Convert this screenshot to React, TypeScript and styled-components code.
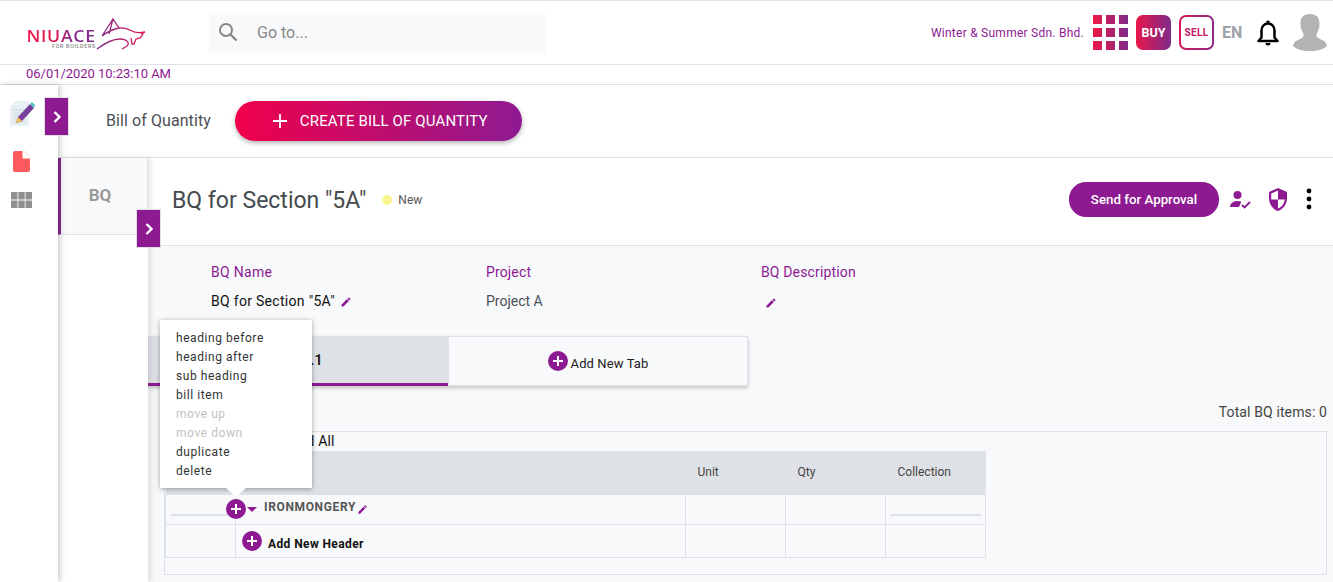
import React from "react";
import styled, { createGlobalStyle } from "styled-components";

const purple = "#8e1a92";
const line = "#dee2e6";
const grey = "#f8f9fa";

const GlobalStyle = createGlobalStyle`
  * { box-sizing: border-box; }
  html, body { margin: 0; height: 100%; overflow: hidden; }
  body { font-family: Roboto, "Liberation Sans", Arial, sans-serif; background: #fff; color: #212529; }
`;

const Page = styled.div`
  width: 1333px;
  height: 582px;
  display: flex;
  flex-direction: column;
  overflow: hidden;
  position: relative;
`;

const Header = styled.header`
  height: 65px;
  border-top: 1px solid ${line};
  border-bottom: 1px solid ${line};
  display: flex;
  align-items: center;
`;

const LogoBox = styled.div`
  width: 209px;
  height: 32px;
  padding-left: 26px;
  display: flex;
  align-items: flex-start;
  flex: none;
  align-self: flex-start;
  margin-top: 17px;
`;

const LogoWords = styled.div`
  display: flex;
  flex-direction: column;
  align-items: flex-end;
  width: 70px;
  margin-top: 12px;
`;

const LogoName = styled.span`
  font-family: "Open Sans", sans-serif;
  font-size: 15.5px;
  height: 13px;
  line-height: 13px;
  letter-spacing: 0.6px;
  font-weight: 600;
  background: linear-gradient(90deg, #ea1a4b 0%, #e01a55 42%, #8a2a8a 62%, #7f2a8c 100%);
  -webkit-background-clip: text;
  background-clip: text;
  color: transparent;
  transform: scaleX(1.14);
  transform-origin: right center;
`;

const LogoSub = styled.span`
  font-size: 5.5px;
  line-height: 5px;
  margin-top: 1px;
  letter-spacing: 0.6px;
  font-weight: 500;
  color: #8a8a8a;
`;

const BullSvg = styled.svg`
  width: 50px;
  height: 32px;
  flex: none;
`;

const SearchBox = styled.div`
  width: 337px;
  height: 40px;
  margin-top: 1px;
  padding-bottom: 2px;
  background: ${grey};
  display: flex;
  align-items: center;
  gap: 19px;
  padding-left: 9px;
  color: #888;
  font-size: 16px;
`;

const HeaderRight = styled.div`
  margin-left: auto;
  display: flex;
  align-items: center;
  height: 100%;
`;

const Company = styled.span`
  font-size: 12px;
  color: ${purple};
  letter-spacing: 0.25px;
  margin-right: 9px;
`;

const Waffle = styled.div`
  width: 35px;
  height: 35px;
  background: linear-gradient(90deg, #ed1846, #7e2a8a);
  margin-right: 8px;
  position: relative;
`;

const WaffleGap = styled.span<{ $v?: boolean }>`
  position: absolute;
  background: #fff;
  ${(p) => (p.$v ? "top:0;bottom:0;width:4px;" : "left:0;right:0;height:4px;")}
`;

const BuyBadge = styled.div`
  width: 35px;
  height: 35px;
  border-radius: 7px;
  background: linear-gradient(90deg, #e8174a, #7e2a8a);
  color: #fff;
  font-size: 12.5px;
  font-weight: 700;
  display: flex;
  align-items: center;
  justify-content: center;
  margin-right: 8px;
`;

const SellBadge = styled.div`
  width: 35px;
  height: 35px;
  border-radius: 7px;
  padding: 2px;
  background: linear-gradient(90deg, #d61a55, #8e2a8a);
  margin-right: 8px;
`;

const SellInner = styled.div`
  width: 100%;
  height: 100%;
  border-radius: 5px;
  background: #fff;
  color: #c8145f;
  font-size: 10px;
  font-weight: 700;
  letter-spacing: 0.4px;
  display: flex;
  align-items: center;
  justify-content: center;
`;

const Lang = styled.span`
  font-size: 16px;
  font-weight: 700;
  color: #9ea3a9;
  width: 23px;
  margin-right: 11px;
`;

const BellSvg = styled.svg`
  width: 24px;
  height: 28px;
  margin-right: 13px;
`;

const AvatarSvg = styled.svg`
  width: 34px;
  height: 37px;
  margin-right: 6px;
`;

const DateRow = styled.div`
  height: 20px;
  border-bottom: 1px solid ${line};
  padding-left: 26px;
  font-size: 13px;
  line-height: 18px;
  letter-spacing: -0.03px;
  color: ${purple};
`;

const Body = styled.div`
  flex: 1;
  display: flex;
  min-height: 0;
`;

const Rail = styled.aside`
  width: 58px;
  flex: none;
  box-shadow: 2px 0 6px rgba(0, 0, 0, 0.22);
  position: relative;
  z-index: 3;
  background: #fff;
  display: flex;
  flex-direction: column;
  align-items: flex-start;
  padding: 15px 0 0 9px;
`;

const RailIcon = styled.svg<{ $mt: number; $ml?: number }>`
  margin-top: ${(p) => p.$mt}px;
  margin-left: ${(p) => p.$ml ?? 0}px;
`;

const Toggle = styled.button<{ $left: number; $top: number }>`
  position: absolute;
  left: ${(p) => p.$left}px;
  top: ${(p) => p.$top}px;
  width: 25px;
  height: 39px;
  background: ${purple};
  border: 1px solid ${line};
  padding: 0;
  display: flex;
  align-items: center;
  justify-content: center;
  z-index: 5;
`;

const Content = styled.main`
  flex: 1;
  min-width: 0;
  display: flex;
  flex-direction: column;
`;

const SubHeader = styled.div`
  height: 73px;
  flex: none;
  border-bottom: 1px solid ${line};
  display: flex;
  align-items: center;
  padding-left: 48px;
  padding-bottom: 1px;
`;

const SubTitle = styled.span`
  font-size: 16px;
  letter-spacing: 0.08px;
  color: #4a4f55;
  margin-right: 24px;
`;

const CreateButton = styled.button`
  width: 287px;
  height: 40px;
  border: 0;
  border-radius: 20px;
  background: linear-gradient(90deg, #f0004a, #8e1a92);
  box-shadow: 0 2px 5px rgba(0, 0, 0, 0.3);
  color: #fff;
  font-family: Roboto, sans-serif;
  font-size: 15px;
  letter-spacing: 0.15px;
  display: flex;
  align-items: center;
  padding: 0 0 0 37px;
  gap: 12px;
`;

const Split = styled.div`
  flex: 1;
  display: flex;
  min-height: 0;
  position: relative;
`;

const SideTabs = styled.div`
  width: 90px;
  flex: none;
  background: #fff;
  box-shadow: 3px 0 6px rgba(0, 0, 0, 0.1);
  z-index: 2;
`;

const SideTab = styled.div`
  height: 77px;
  background: ${grey};
  border-left: 3px solid #8a2a90;
  border-right: 1px solid ${line};
  border-bottom: 1px solid ${line};
  display: flex;
  align-items: center;
  justify-content: center;
  padding: 0 8px 2px 0;
  font-size: 17px;
  font-weight: 700;
  color: #9a9a9a;
`;

const Detail = styled.section`
  flex: 1;
  min-width: 0;
  display: flex;
  flex-direction: column;
  background: ${grey};
`;

const DetailHead = styled.div`
  height: 88px;
  flex: none;
  background: #fff;
  border-bottom: 1px solid ${line};
  display: flex;
  align-items: center;
  padding: 0 21px 5px 24px;
`;

const Heading = styled.h1`
  margin: 2px 16px 0 0;
  font-size: 23px;
  font-weight: 400;
  color: #464a4e;
`;

const StatusDot = styled.span`
  width: 10px;
  height: 10px;
  border-radius: 50%;
  background: #fbf48f;
  margin: 2px 6px 0 0;
`;

const StatusText = styled.span`
  font-size: 12px;
  color: #555;
  margin-top: 2px;
`;

const HeadActions = styled.div`
  margin-left: auto;
  display: flex;
  align-items: center;
`;

const ApprovalButton = styled.button`
  width: 150px;
  height: 35px;
  border: 0;
  border-radius: 17px;
  background: ${purple};
  color: #fff;
  font-family: Roboto, sans-serif;
  font-size: 13.3px;
  font-weight: 500;
  margin-right: 9px;
`;

const PersonSvg = styled.svg`
  margin-right: 17px;
`;

const ShieldSvg = styled.svg`
  margin-right: 19px;
`;

const FieldRow = styled.div`
  display: flex;
  padding: 18px 0 0 63px;
  height: 90px;
  flex: none;
`;

const Field = styled.div`
  width: 275px;
  flex: none;
`;

const FieldLabel = styled.div<{ $wide?: boolean }>`
  font-size: 14px;
  line-height: 17px;
  letter-spacing: ${(p) => (p.$wide ? "0.3px" : "0.15px")};
  color: ${purple};
  margin-bottom: 12px;
`;

const FieldValue = styled.div<{ $dark?: boolean }>`
  font-size: 14px;
  line-height: 17px;
  letter-spacing: ${(p) => (p.$dark ? "0.3px" : "0")};
  color: ${(p) => (p.$dark ? "#111" : "#495057")};
  display: flex;
  align-items: center;
  gap: 5px;
  min-height: 17px;
`;

const EmptyValue = styled(FieldValue)`
  padding: 2px 0 0 4px;
`;

const TabBar = styled.div`
  display: flex;
  width: 600px;
  height: 50px;
  flex: none;
  box-shadow: 0 2px 4px rgba(0, 0, 0, 0.22);
`;

const TabCell = styled.div<{ $active?: boolean }>`
  width: 300px;
  height: 50px;
  display: flex;
  align-items: center;
  justify-content: center;
  font-size: 13px;
  letter-spacing: 0.1px;
  gap: 3px;
  padding-top: 5px;
  color: #222;
  background: ${(p) => (p.$active ? line : grey)};
  border: 1px solid ${line};
  ${(p) =>
    p.$active &&
    `border-width: 0 0 3px; border-bottom-color: ${purple}; font-weight: 700; font-size: 14px; padding: 0 0 0 2px;`}
`;

const Totals = styled.div`
  text-align: right;
  font-size: 14px;
  line-height: 17px;
  letter-spacing: 0.12px;
  color: #444;
  padding: 18px 6px 0 0;
  height: 45px;
  flex: none;
`;

const TablePanel = styled.div`
  margin: 0 6px 0 16px;
  height: 144px;
  flex: none;
  border: 1px solid ${line};
`;

const ExpandLine = styled.div`
  height: 19px;
  padding-left: 103px;
  font-size: 14px;
  line-height: 19px;
  letter-spacing: 0.1px;
  color: #111;
`;

const BqTable = styled.table`
  border-collapse: collapse;
  table-layout: fixed;
  width: 820px;
`;

const HeadCell = styled.th`
  height: 43px;
  background: ${line};
  font-size: 12px;
  font-weight: 400;
  color: #444;
  text-align: left;
  padding: 0 0 0 12px;
`;

const Cell = styled.td<{ $h: number }>`
  height: ${(p) => p.$h}px;
  border: 1px solid ${line};
  padding: 0;
  vertical-align: middle;
  position: relative;
`;

const CellRule = styled.div<{ $ml: number; $w: number }>`
  height: 2px;
  background: ${line};
  margin: 11px 0 0 ${(p) => p.$ml}px;
  width: ${(p) => p.$w}px;
`;

const ItemRow = styled.div`
  display: flex;
  align-items: center;
  height: 29px;
  margin-left: -10px;
  position: relative;
`;

const RoundPlus = styled.span<{ $size: number }>`
  width: ${(p) => p.$size}px;
  height: ${(p) => p.$size}px;
  border-radius: 50%;
  background: ${purple};
  flex: none;
  display: inline-flex;
  align-items: center;
  justify-content: center;
`;

const TabPlus = styled(RoundPlus)`
  margin-bottom: 5px;
`;

const Caret = styled.span`
  width: 0;
  height: 0;
  border-left: 5px solid transparent;
  border-right: 5px solid transparent;
  border-top: 5px solid ${purple};
  margin: 0 7px 0 1px;
`;

const ItemName = styled.span`
  font-size: 12px;
  font-weight: 700;
  color: #555;
  letter-spacing: 0.65px;
  padding-bottom: 4px;
  margin-right: 1px;
`;

const AddHeaderRow = styled.div`
  display: flex;
  align-items: center;
  gap: 6px;
  padding: 0 0 0 6px;
  font-size: 12px;
  font-weight: 700;
  letter-spacing: 0.4px;
  color: #111;
`;

const AddHeaderText = styled.span`
  padding-top: 6px;
`;

const Popover = styled.div`
  position: absolute;
  left: 160px;
  top: 320px;
  width: 152px;
  height: 168px;
  background: #fff;
  box-shadow: 0 1px 5px rgba(0, 0, 0, 0.35);
  padding: 9px 0 0 16px;
  z-index: 10;

  &::after {
    content: "";
    position: absolute;
    left: 66px;
    bottom: -9px;
    width: 0;
    height: 0;
    border-left: 10px solid transparent;
    border-right: 10px solid transparent;
    border-top: 9px solid #fff;
  }
`;

const PopItem = styled.div<{ $off?: boolean }>`
  font-size: 12px;
  line-height: 19px;
  letter-spacing: 0.56px;
  color: ${(p) => (p.$off ? "#c2c2c2" : "#333")};
`;

const Chevron = () => (
  <svg width="10" height="14" viewBox="0 0 10 14">
    <path d="M2.500 2 7.500 7l-5 5" fill="none" stroke="#fff" strokeWidth="2.400" />
  </svg>
);

const Pencil = ({ size = 12 }: { size?: number }) => (
  <svg width={size} height={size} viewBox="0 0 24 24">
    <path fill={purple} d="M3 17.250V21h3.750L17.810 9.940l-3.750-3.750L3 17.250zM20.710 7.040a1 1 0 0 0 0-1.410l-2.340-2.340a1 1 0 0 0-1.410 0l-1.830 1.830 3.750 3.750 1.830-1.830z" />
  </svg>
);

const PlusMark = ({ size }: { size: number }) => (
  <svg width={size} height={size} viewBox="0 0 12 12">
    <path d="M6 1v10M1 6h10" stroke="#fff" strokeWidth="2" />
  </svg>
);

const popItems: [string, boolean][] = [
  ["heading before", false],
  ["heading after", false],
  ["sub heading", false],
  ["bill item", false],
  ["move up", true],
  ["move down", true],
  ["duplicate", false],
  ["delete", false],
];

export default function App() {
  return (
    <Page>
      <GlobalStyle />
      <Header>
        <LogoBox>
          <LogoWords>
            <LogoName>NIUACE</LogoName>
            <LogoSub>FOR BUILDERS</LogoSub>
          </LogoWords>
          <BullSvg viewBox="0 0 50 32">
            <defs>
              <linearGradient id="bull" x1="0" x2="1" y1="0" y2="0">
                <stop offset="0" stopColor="#7f2a8c" />
                <stop offset="1" stopColor="#e0194f" />
              </linearGradient>
            </defs>
            <path
              d="M6 18 L17 1 L23 10 C28 9 32 11 36 13 C39 15 43 15 49 14 L45 15 L47 16 L44 20 L40 21 L38 26 L36 26 L35 20 M6 18 C11 14 18 11 23 10 M17 1 L13 16 M1 31 C9 25 17 21 24 21 C31 21 34 25 31 28 L26 31"
              fill="none"
              stroke="url(#bull)"
              strokeWidth="1.300"
            />
          </BullSvg>
        </LogoBox>
        <SearchBox>
          <svg width="20" height="20" viewBox="0 0 20 20">
            <circle cx="8" cy="8" r="6" fill="none" stroke="#888" strokeWidth="2" />
            <path d="M12.500 12.500 18.500 18.500" stroke="#888" strokeWidth="2.400" />
          </svg>
          Go to...
        </SearchBox>
        <HeaderRight>
          <Company>Winter &amp; Summer Sdn. Bhd.</Company>
          <Waffle>
            <WaffleGap $v style={{ left: 9 }} />
            <WaffleGap $v style={{ left: 22 }} />
            <WaffleGap style={{ top: 9 }} />
            <WaffleGap style={{ top: 22 }} />
          </Waffle>
          <BuyBadge>BUY</BuyBadge>
          <SellBadge>
            <SellInner>SELL</SellInner>
          </SellBadge>
          <Lang>EN</Lang>
          <BellSvg viewBox="0 0 24 28">
            <path
              d="M2.500 22h19l-3-3.500V11.500c0-4-2.800-7-6.500-7s-6.500 3-6.500 7v7L2.500 22z"
              fill="none"
              stroke="#000"
              strokeWidth="2.500"
              strokeLinejoin="round"
            />
            <path d="M10 3.500a2 2 0 0 1 4 0zM9.500 24h5a2.500 2.500 0 0 1-5 0z" fill="#000" />
          </BellSvg>
          <AvatarSvg viewBox="0 0 34 37">
            <path
              d="M17 0c6.500 0 9.500 3.500 9.500 9.500 0 4-1 7-2.500 9.500-1.200 2.200-.5 4.200 1.500 5.200L30 26.500c3 1.500 4 4 4 5.500-3 3-9 5-17 5S3 35 0 32c0-1.500 1-4 4-5.500l4.500-2.300c2-1 2.700-3 1.500-5.200C8.500 16.500 7.500 13.500 7.500 9.500 7.500 3.500 10.500 0 17 0z"
              fill="#b3b3b3"
            />
          </AvatarSvg>
        </HeaderRight>
      </Header>
      <DateRow>06/01/2020 10:23:10 AM</DateRow>
      <Body>
        <Rail>
          <RailIcon $mt={0} width="26" height="27" viewBox="0 0 26 27">
            <path d="M1 7 7 1h13v25H1z" fill="#e8f0f3" />
            <path d="M4 10h13M4 13h13M4 16h13M4 19h13M4 22h13" stroke="#ccd8dd" strokeWidth="1" />
            <path d="M9 17 21 4l4 4L13 21l-6 2z" fill="#7a3f9d" />
            <path d="M21 4l2-2 3 3-1 3z" fill="#4cc3bd" />
            <path d="M9 17l4 4-6 2z" fill="#f2c14e" />
          </RailIcon>
          <RailIcon $mt={24} $ml={4} width="17" height="21" viewBox="0 0 17 21">
            <path d="M2 0h9l6 6v13a2 2 0 0 1-2 2H2a2 2 0 0 1-2-2V2a2 2 0 0 1 2-2z" fill="#ff5a5f" />
            <path d="M9.500 0h1.500l6 6v1.500H9.500z" fill="#fff" />
          </RailIcon>
          <RailIcon $mt={20} $ml={2} width="21" height="16" viewBox="0 0 21 16">
            <path
              fill="#8f8f8f"
              d="M0 0h6.500v7.500H0zM7.300 0h6.400v7.500H7.300zM14.500 0H21v7.500h-6.500zM0 8.500h6.500V16H0zM7.300 8.500h6.400V16H7.300zM14.500 8.500H21V16h-6.500z"
            />
          </RailIcon>
          <Toggle $left={44} $top={12}>
            <Chevron />
          </Toggle>
        </Rail>
        <Content>
          <SubHeader>
            <SubTitle>Bill of Quantity</SubTitle>
            <CreateButton>
              <svg width="16" height="16" viewBox="0 0 16 16">
                <path d="M8 1v14M1 8h14" stroke="#fff" strokeWidth="1.800" />
              </svg>
              CREATE BILL OF QUANTITY
            </CreateButton>
          </SubHeader>
          <Split>
            <SideTabs>
              <SideTab>BQ</SideTab>
            </SideTabs>
            <Toggle $left={78} $top={51}>
              <Chevron />
            </Toggle>
            <Detail>
              <DetailHead>
                <Heading>BQ for Section "5A"</Heading>
                <StatusDot />
                <StatusText>New</StatusText>
                <HeadActions>
                  <ApprovalButton>Send for Approval</ApprovalButton>
                  <PersonSvg width="24" height="24" viewBox="0 0 24 24">
                    <circle cx="9.500" cy="8" r="4" fill={purple} />
                    <path d="M2 20c0-4 4-6 7.500-6 1.500 0 2.800.3 3.800.8L11 20z" fill={purple} />
                    <path d="M14 18l2.500 2.500L22 15" fill="none" stroke={purple} strokeWidth="1.800" />
                  </PersonSvg>
                  <ShieldSvg width="18" height="23" viewBox="2 2 16 20" preserveAspectRatio="none">
                    <path d="M10 2 2 5.500V11c0 5 3.400 9.600 8 11 4.600-1.400 8-6 8-11V5.500z" fill={purple} />
                    <path d="M10 4.200v7.800H4V6.800zM10 12h6c-.5 3.700-3 6.900-6 7.900z" fill="#fff" />
                  </ShieldSvg>
                  <svg width="6" height="22" viewBox="0 0 6 22">
                    <circle cx="3" cy="3" r="2.400" />
                    <circle cx="3" cy="11" r="2.400" />
                    <circle cx="3" cy="19" r="2.400" />
                  </svg>
                </HeadActions>
              </DetailHead>
              <FieldRow>
                <Field>
                  <FieldLabel $wide>BQ Name</FieldLabel>
                  <FieldValue $dark>
                    BQ for Section "5A" <Pencil />
                  </FieldValue>
                </Field>
                <Field>
                  <FieldLabel>Project</FieldLabel>
                  <FieldValue>Project A</FieldValue>
                </Field>
                <Field>
                  <FieldLabel>BQ Description</FieldLabel>
                  <EmptyValue>
                    <Pencil />
                  </EmptyValue>
                </Field>
              </FieldRow>
              <TabBar>
                <TabCell $active>Tab 1.1</TabCell>
                <TabCell>
                  <TabPlus $size={20}>
                    <PlusMark size={12} />
                  </TabPlus>
                  Add New Tab
                </TabCell>
              </TabBar>
              <Totals>Total BQ items: 0</Totals>
              <TablePanel>
                <ExpandLine>Expand All</ExpandLine>
                <BqTable>
                  <colgroup>
                    <col width="70" />
                    <col width="450" />
                    <col width="100" />
                    <col width="100" />
                    <col width="100" />
                  </colgroup>
                  <thead>
                    <tr>
                      <HeadCell />
                      <HeadCell />
                      <HeadCell>Unit</HeadCell>
                      <HeadCell>Qty</HeadCell>
                      <HeadCell>Collection</HeadCell>
                    </tr>
                  </thead>
                  <tbody>
                    <tr>
                      <Cell $h={30}>
                        <CellRule $ml={5} $w={57} />
                      </Cell>
                      <Cell $h={30}>
                        <ItemRow>
                          <RoundPlus $size={20}>
                            <PlusMark size={12} />
                          </RoundPlus>
                          <Caret />
                          <ItemName>IRONMONGERY</ItemName>
                          <Pencil size={11} />
                        </ItemRow>
                      </Cell>
                      <Cell $h={30} />
                      <Cell $h={30} />
                      <Cell $h={30}>
                        <CellRule $ml={4} $w={91} />
                      </Cell>
                    </tr>
                    <tr>
                      <Cell $h={33} />
                      <Cell $h={33}>
                        <AddHeaderRow>
                          <RoundPlus $size={20}>
                            <PlusMark size={12} />
                          </RoundPlus>
                          <AddHeaderText>Add New Header</AddHeaderText>
                        </AddHeaderRow>
                      </Cell>
                      <Cell $h={33} />
                      <Cell $h={33} />
                      <Cell $h={33} />
                    </tr>
                  </tbody>
                </BqTable>
              </TablePanel>
            </Detail>
          </Split>
        </Content>
      </Body>
      <Popover>
        {popItems.map(([label, off]) => (
          <PopItem key={label} $off={off}>
            {label}
          </PopItem>
        ))}
      </Popover>
    </Page>
  );
}
